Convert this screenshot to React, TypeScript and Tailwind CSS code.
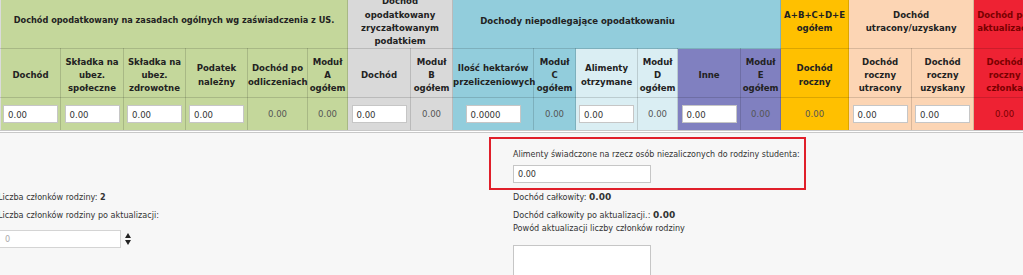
import React from 'react';

type Col = {
  w: number;
  bg: string;
  head: string[];
  input?: string;
  red?: boolean;
};

const G = 'bg-[#c4d79b]';
const GRAY = 'bg-[#d9d9d9]';
const BLUE = 'bg-[#92cddc]';
const LBLUE = 'bg-[#daeef3]';
const PURPLE = 'bg-[#8080c0]';
const YELLOW = 'bg-[#ffc000]';
const PEACH = 'bg-[#fcd5b4]';
const RED = 'bg-[#ee2233]';

const cols: Col[] = [
  { w: 60, bg: G, head: ['Dochód'], input: '0.00' },
  { w: 63, bg: G, head: ['Składka na', 'ubez.', 'społeczne'], input: '0.00' },
  { w: 62, bg: G, head: ['Składka na', 'ubez.', 'zdrowotne'], input: '0.00' },
  { w: 62, bg: G, head: ['Podatek', 'należny'], input: '0.00' },
  { w: 60, bg: G, head: ['Dochód po', 'odliczeniach'] },
  { w: 40, bg: G, head: ['Moduł', 'A', 'ogółem'] },
  { w: 63, bg: GRAY, head: ['Dochód'], input: '0.00' },
  { w: 42, bg: GRAY, head: ['Moduł', 'B', 'ogółem'] },
  { w: 81, bg: BLUE, head: ['Ilość hektarów', 'przeliczeniowych'], input: '0.0000' },
  { w: 42, bg: BLUE, head: ['Moduł', 'C', 'ogółem'] },
  { w: 62, bg: LBLUE, head: ['Alimenty', 'otrzymane'], input: '0.00' },
  { w: 40, bg: LBLUE, head: ['Moduł', 'D', 'ogółem'] },
  { w: 63, bg: PURPLE, head: ['Inne'], input: '0.00' },
  { w: 40, bg: PURPLE, head: ['Moduł', 'E', 'ogółem'] },
  { w: 68, bg: YELLOW, head: ['Dochód', 'roczny'] },
  { w: 63, bg: PEACH, head: ['Dochód', 'roczny', 'utracony'], input: '0.00' },
  { w: 62, bg: PEACH, head: ['Dochód', 'roczny', 'uzyskany'], input: '0.00' },
  { w: 62, bg: RED, head: ['Dochód', 'roczny', 'członka'], red: true },
];

const cell = 'border border-[#00000024] text-center align-middle p-0';

const Lines = ({ lines }: { lines: string[] }) => (
  <>
    {lines.map((l, i) => (
      <div key={i} className="whitespace-nowrap">{l}</div>
    ))}
  </>
);

export default function App() {
  return (
    <div className="w-[1023px] h-[275px] overflow-hidden bg-[#f7f7f7] font-['DejaVu_Sans_Condensed','DejaVu_Sans',sans-serif] text-[#333]">
      <div className="h-[133px] overflow-hidden border-b-[3px] border-double border-[#c8c8c8] bg-white">
        <table className="-mt-[7px] table-fixed border-collapse w-[1035px] text-[9.5px] leading-[13.3px] font-bold text-[#222]">
          <colgroup>
            {cols.map((c, i) => (
              <col key={i} style={{ width: c.w }} />
            ))}
          </colgroup>
          <tbody>
            <tr className="h-[55px]">
              <td colSpan={6} className={`${cell} ${G} text-[9.1px]`}>
                Dochód opodatkowany na zasadach ogólnych wg zaświadczenia z US.
              </td>
              <td colSpan={2} className={`${cell} ${GRAY}`}>
                <Lines lines={['Dochód', 'opodatkowany', 'zryczałtowanym', 'podatkiem']} />
              </td>
              <td colSpan={6} className={`${cell} ${BLUE} pr-[78px]`}>
                Dochody niepodlegające opodatkowaniu
              </td>
              <td className={`${cell} ${YELLOW}`}>
                <Lines lines={['A+B+C+D+E', 'ogółem']} />
              </td>
              <td colSpan={2} className={`${cell} ${PEACH}`}>
                <Lines lines={['Dochód', 'utracony/uzyskany']} />
              </td>
              <td className={`${cell} ${RED} text-[#7a0000] text-left pl-[3px]`}>
                <Lines lines={['Dochód po', 'aktualizacji']} />
              </td>
            </tr>
            <tr className="h-[49px]">
              {cols.map((c, i) => (
                <td key={i} className={`${cell} ${c.bg} pt-[3px] ${c.red ? 'text-[#7a0000]' : ''}`}>
                  <Lines lines={c.head} />
                </td>
              ))}
            </tr>
            <tr className="h-[33px]">
              {cols.map((c, i) => (
                <td key={i} className={`${cell} ${c.bg} font-normal`}>
                  {c.input ? (
                    <div className="mx-auto w-[55px] h-[18px] bg-white border border-[#c6c6c6] text-left pl-[4px] leading-[17px] text-[9.5px] text-[#333]">
                      {c.input}
                    </div>
                  ) : (
                    <span className={`text-[9.5px] ${c.red ? 'text-[#7a0000]' : 'text-[#555]'}`}>0.00</span>
                  )}
                </td>
              ))}
            </tr>
          </tbody>
        </table>
      </div>

      <div className="flex text-[9px] leading-[13px] text-[#333]">
        <div className="w-[491px] -ml-[2px] pt-[58px]">
          <div>
            Liczba członków rodziny: <span className="font-bold">2</span>
          </div>
          <div className="mt-[5px]">Liczba członków rodziny po aktualizacji:</div>
          <div className="mt-[8px] flex items-center">
            <div className="w-[123px] h-[18px] bg-white border border-[#d4d4d4] pl-[6px] leading-[16px] text-[#aaa]">0</div>
            <div className="ml-[4px] flex flex-col gap-[2px]">
              <svg width="6" height="5" viewBox="0 0 6 5"><path d="M3 0L6 5H0Z" fill="#222" /></svg>
              <svg width="6" height="5" viewBox="0 0 6 5"><path d="M0 0H6L3 5Z" fill="#222" /></svg>
            </div>
          </div>
        </div>
        <div className="pt-[4px]">
          <div className="w-[317px] h-[53px] border-[2.5px] border-[#e01f2a] pl-[22px] pt-[9px]">
            <div className="whitespace-nowrap text-[8.85px]">Alimenty świadczone na rzecz osób niezaliczonych do rodziny studenta:</div>
            <div className="mt-[4px] w-[138px] h-[18px] bg-white border border-[#c6c6c6] pl-[4px] leading-[16px]">0.00</div>
          </div>
          <div className="pl-[24px]">
            <div className="mt-[1px]">
              Dochód całkowity: <span className="font-bold font-['DejaVu_Sans',sans-serif]">0.00</span>
            </div>
            <div className="mt-[5px]">
              Dochód całkowity po aktualizacji.: <span className="font-bold font-['DejaVu_Sans',sans-serif]">0.00</span>
            </div>
            <div>Powód aktualizacji liczby członków rodziny</div>
            <div className="mt-[10px] w-[138px] h-[40px] bg-white border border-[#c6c6c6]" />
          </div>
        </div>
      </div>
    </div>
  );
}
